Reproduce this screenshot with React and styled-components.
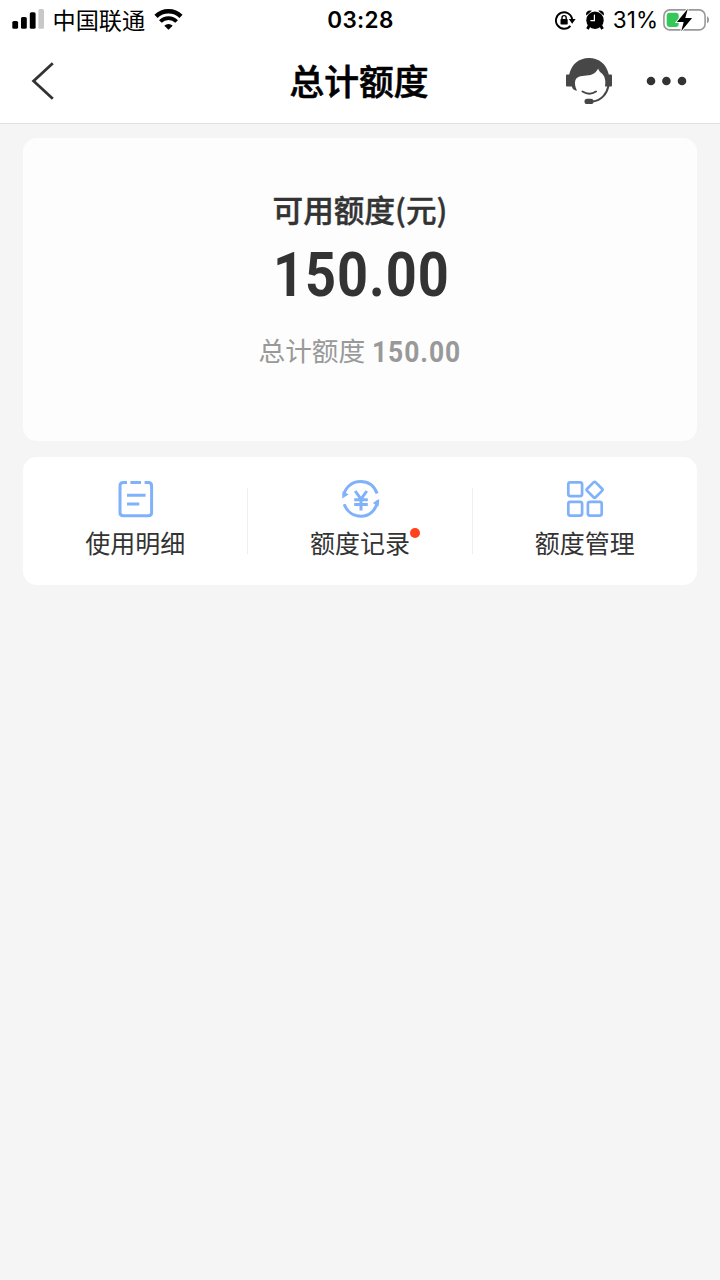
import React from "react";
import styled, { createGlobalStyle } from "styled-components";

const GlobalStyle = createGlobalStyle`
  * {
    box-sizing: border-box;
  }
  body {
    margin: 0;
    background: #f5f5f5;
    font-family: "Noto Sans CJK SC", sans-serif;
  }
  svg {
    display: block;
    flex-shrink: 0;
  }
`;

const Root = styled.div`
  width: 720px;
  min-height: 1280px;
  background: #f5f5f5;
`;
const Header = styled.header`
  height: 124px;
  background: #fff;
  border-bottom: 1px solid #e0e0e0;
`;
const StatusBar = styled.div`
  display: grid;
  grid-template-columns: 1fr auto 1fr;
  align-items: center;
  height: 39px;
  padding: 0 10px 0 12px;
  color: #000;
`;
const StatusGroup = styled.div`
  display: flex;
  align-items: center;
  justify-content: ${(props) => (props.$end ? "flex-end" : "flex-start")};
`;
const Carrier = styled.span`
  margin: 0 9px 0 7.5px;
  padding-bottom: 2px;
  font-size: 23.2px;
  line-height: 36px;
`;
const Time = styled.span`
  margin-left: -1px;
  padding-top: 1px;
  font-family: Inter, sans-serif;
  font-size: 22.5px;
  font-weight: 600;
  letter-spacing: 0.3px;
  line-height: 38px;
`;
const Percent = styled.span`
  margin: 0 5px 0 9px;
  padding-top: 1px;
  font-family: Inter, sans-serif;
  font-size: 22.5px;
  line-height: 38px;
`;
const StatusIcons = styled.div`
  display: flex;
  align-items: center;
  gap: 10px;
`;
const NavBar = styled.div`
  display: grid;
  grid-template-columns: 1fr auto 1fr;
  align-items: center;
  height: 83px;
  padding: 0 33px 0 31px;
`;
const Title = styled.h1`
  margin: 0;
  padding-bottom: 2px;
  font-size: 34.8px;
  font-weight: 500;
  line-height: 80px;
  color: #000;
  -webkit-text-stroke: 0.6px #000;
`;
const NavActions = styled.div`
  display: flex;
  align-items: center;
  justify-content: flex-end;
  gap: 33px;
`;
const Content = styled.main`
  display: flex;
  flex-direction: column;
  gap: 16px;
  padding: 14px 23px 0;
`;
const QuotaCard = styled.section`
  display: flex;
  flex-direction: column;
  align-items: center;
  height: 303px;
  padding-top: 48px;
  border-radius: 14px;
  background: #fdfdfd;
`;
const QuotaLabel = styled.div`
  font-size: 30.6px;
  font-weight: 500;
  line-height: 46px;
  color: #333;
  -webkit-text-stroke: 0.4px #333;
`;
const Amount = styled.span`
  display: block;
  font-family: Roboto, sans-serif;
  font-weight: 700;
  font-size: ${(props) => props.$size}px;
  letter-spacing: ${(props) => props.$spacing}px;
  line-height: 1;
  transform: scaleX(0.88);
  transform-origin: left center;
`;
const QuotaAmount = styled.div`
  width: 175px;
  height: 80px;
  padding-top: 13px;
  color: #333;
`;
const QuotaTotal = styled.div`
  display: flex;
  align-items: center;
  gap: 7px;
  width: 203px;
  height: 40px;
  margin-top: 18px;
  font-size: 26.7px;
  line-height: 40px;
  white-space: nowrap;
  color: #999;
`;
const TotalAmount = styled(Amount)`
  margin-top: 3px;
`;
const Menu = styled.nav`
  display: flex;
  height: 128px;
  border-radius: 14px;
  background: #fff;
`;
const MenuItem = styled.div`
  display: flex;
  flex: 1;
  flex-direction: column;
  align-items: center;
  padding-top: 22px;
`;
const Divider = styled.div`
  align-self: center;
  width: 1px;
  height: 66px;
  margin: 0 -0.5px;
  background: #eee;
`;
const MenuLabel = styled.div`
  position: relative;
  margin-top: 4px;
  font-size: 25px;
  line-height: 38px;
  color: #333;
`;
const Dot = styled.i`
  position: absolute;
  top: 5px;
  right: -10px;
  width: 10px;
  height: 10px;
  border-radius: 50%;
  background: #ff411c;
`;

function SignalIcon() {
  return (
    <svg width="33" height="21" viewBox="0 0 33 21">
      <rect x="0.3" y="12" width="5.8" height="7.8" rx="1.6" />
      <rect x="9" y="8" width="5.8" height="11.8" rx="1.6" />
      <rect x="17.8" y="3.2" width="5.8" height="16.6" rx="1.6" />
      <rect x="26.4" y="0" width="5.6" height="19.8" rx="1.6" fill="#c8c8c8" />
    </svg>
  );
}

function WifiIcon() {
  return (
    <svg width="29" height="21" viewBox="0 0 28 21" fill="none" stroke="#000">
      <path d="M1.5 7.4a17.8 17.8 0 0 1 25 0" strokeWidth="4.4" />
      <path d="M5.9 12.5a11.5 11.5 0 0 1 16.2 0" strokeWidth="3.8" />
      <path d="M14 20.8l-4.2-4.1a6 6 0 0 1 8.4 0z" fill="#000" stroke="none" />
    </svg>
  );
}

function RotationLockIcon() {
  return (
    <svg width="21" height="20" viewBox="0 0 21 20">
      <path
        d="M15.4 15.8A8.2 8.2 0 1 1 17.2 9"
        fill="none"
        stroke="#000"
        strokeWidth="1.9"
      />
      <path d="M13.8 9h6.8l-3.4 4.8z" />
      <rect x="5.5" y="9" width="7.2" height="5.6" rx="0.8" />
      <path
        d="M7 9.5V7.7a2.1 2.1 0 0 1 4.2 0v1.8"
        fill="none"
        stroke="#000"
        strokeWidth="1.4"
      />
    </svg>
  );
}

function AlarmIcon() {
  return (
    <svg width="18" height="20" viewBox="0 0 18 20">
      <circle cx="9" cy="10.2" r="8.7" />
      <path d="M.4 5.6C-.9 2 2 0 5.8.8zM17.6 5.6C18.9 2 16 0 12.2.8z" />
      <path
        d="M3.3 15.500l-1.800 3.500M14.700 15.500l1.800 3.500"
        stroke="#000"
        strokeWidth="2.8"
      />
      <path
        d="M8.4 5.200v5.400H4.800"
        fill="none"
        stroke="#fff"
        strokeWidth="1.200"
        strokeLinecap="round"
      />
    </svg>
  );
}

function BatteryIcon() {
  return (
    <svg width="47" height="24" viewBox="0 0 47 24">
      <rect
        x="0.9"
        y="1.9"
        width="41.2"
        height="20"
        rx="6"
        fill="#fff"
        stroke="#999"
        strokeWidth="1.6"
      />
      <path d="M44 8.3c2.7 1 2.7 6 0 7z" fill="#999" />
      <rect x="3.7" y="4.7" width="12" height="14.4" rx="3" fill="#34c759" />
      <path
        d="M24.8.8L13.9 14h6.8l-2.5 9.200L29.100 10h-6.800z"
        stroke="#fff"
        strokeWidth="2"
        paintOrder="stroke"
      />
    </svg>
  );
}

function BackIcon() {
  return (
    <svg width="24" height="38" viewBox="0 0 24 38">
      <path
        d="M21.8 1.200L2.600 19l19.200 17.800"
        fill="none"
        stroke="#333"
        strokeWidth="2.800"
      />
    </svg>
  );
}

function ServiceIcon() {
  return (
    <svg width="48" height="48" viewBox="0 0 48 48">
      <g fill="#474747">
        <path d="M4.2 17.5C6.4 7.4 13.8 1 24 1s17.6 6.4 19.8 16.5H46q1 0 1 1v10q0 1-1 1h-6c.8-4.5.3-9.500-2.600-12.500-2-1.800-3.400-2.900-4.300-5.600-1.800 4.200-5.600 6.800-11.600 7-6 .2-10.300 1.500-11.200 5.200-.7 3-.3 6 1.700 10.200-3-.4-4.400-1.800-5.200-4.300H2q-1 0-1-1v-10q0-1 1-1z" />
        <rect x="19.5" y="41.8" width="9" height="5.2" rx="2.6" />
      </g>
      <path
        d="M17.5 34.500q7 4.300 13.500 0M43.400 29c-1.500 8-7.300 14.500-15.600 15.500"
        fill="none"
        stroke="#474747"
        strokeWidth="2"
        strokeLinecap="round"
      />
    </svg>
  );
}

function MoreIcon() {
  return (
    <svg width="41" height="10" viewBox="0 0 41 10" fill="#333">
      <circle cx="5" cy="5" r="4.3" />
      <circle cx="20.4" cy="5" r="4.3" />
      <circle cx="36" cy="5" r="4.3" />
    </svg>
  );
}

function DetailIcon() {
  return (
    <svg
      width="40"
      height="40"
      viewBox="0 0 40 40"
      fill="none"
      stroke="#7fb2fb"
      strokeWidth="3"
    >
      <path d="M12 3.500H8.200q-3.200 0-3.200 3.200v26.800q0 3.200 3.200 3.200h25.200q3.200 0 3.200-3.200v-26.800q0-3.200-3.200-3.200h-3.800M15.400 3.500H26M12 16.200h18.600M12 25h12.300" />
    </svg>
  );
}

function RecordIcon() {
  return (
    <svg
      width="40"
      height="40"
      viewBox="0 0 40 40"
      fill="none"
      stroke="#7fb2fb"
      strokeWidth="3"
    >
      <path d="M3.6 16.500C5.400 8 12 2.600 20.500 2.600c7.600 0 13.800 4.400 16.600 12M37.800 21.500C36 31.600 29.300 37.300 21 37.300c-7.600 0-14-4.500-16.800-12" />
      <path
        d="M2.200 19.500l.6-7.500 5.800 3.600zM39.200 20l-.6 7.500-5.800-3.600z"
        fill="#7fb2fb"
        stroke="none"
      />
      <path d="M15.200 12l5.800 8.200 5.800-8.200M14.200 20.800h13.600M14.200 25.600h13.600M21 20v11.500" />
    </svg>
  );
}

function ManageIcon() {
  return (
    <svg
      width="40"
      height="40"
      viewBox="0 0 40 40"
      fill="none"
      stroke="#7fb2fb"
      strokeWidth="2.7"
    >
      <rect x="3.3" y="3.300" width="13.800" height="13.800" rx="2" />
      <rect x="3.3" y="22.800" width="13.800" height="13.800" rx="2" />
      <rect x="22.9" y="22.800" width="13.800" height="13.800" rx="2" />
      <rect
        x="23.6"
        y="4.800"
        width="12"
        height="12"
        rx="1.500"
        transform="rotate(45 29.600 10.800)"
      />
    </svg>
  );
}

function PhoneStatus() {
  return (
    <StatusBar>
      <StatusGroup>
        <SignalIcon />
        <Carrier>中国联通</Carrier>
        <WifiIcon />
      </StatusGroup>
      <Time>03:28</Time>
      <StatusGroup $end>
        <StatusIcons>
          <RotationLockIcon />
          <AlarmIcon />
        </StatusIcons>
        <Percent>31%</Percent>
        <BatteryIcon />
      </StatusGroup>
    </StatusBar>
  );
}

export default function App() {
  return (
    <Root>
      <GlobalStyle />
      <Header>
        <PhoneStatus />
        <NavBar>
          <BackIcon />
          <Title>总计额度</Title>
          <NavActions>
            <ServiceIcon />
            <MoreIcon />
          </NavActions>
        </NavBar>
      </Header>
      <Content>
        <QuotaCard>
          <QuotaLabel>可用额度(元)</QuotaLabel>
          <QuotaAmount>
            <Amount $size={61.5} $spacing={1.1}>
              150.00
            </Amount>
          </QuotaAmount>
          <QuotaTotal>
            总计额度
            <TotalAmount $size={30} $spacing={1.1}>
              150.00
            </TotalAmount>
          </QuotaTotal>
        </QuotaCard>
        <Menu>
          <MenuItem>
            <DetailIcon />
            <MenuLabel>使用明细</MenuLabel>
          </MenuItem>
          <Divider />
          <MenuItem>
            <RecordIcon />
            <MenuLabel>
              额度记录
              <Dot />
            </MenuLabel>
          </MenuItem>
          <Divider />
          <MenuItem>
            <ManageIcon />
            <MenuLabel>额度管理</MenuLabel>
          </MenuItem>
        </Menu>
      </Content>
    </Root>
  );
}
